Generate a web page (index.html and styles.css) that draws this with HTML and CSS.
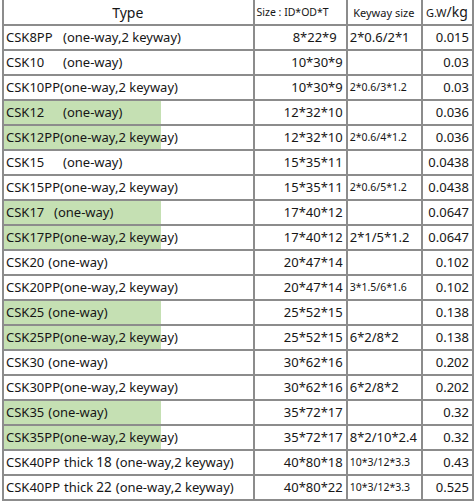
FILE: index.html
```html
<!DOCTYPE html>
<html>
<head>
<meta charset="utf-8">
<link rel="stylesheet" href="styles.css">
</head>
<body>
<table class="spec">
  <colgroup>
    <col class="c-type"><col class="c-size"><col class="c-key"><col class="c-gw">
  </colgroup>
  <tr class="head">
    <td class="h-type">Type</td>
    <td class="h-size">Size : ID*OD*T</td>
    <td class="h-key">Keyway size</td>
    <td class="h-gw">G.W<span class="kg">/kg</span></td>
  </tr>
  <tr><td class="type"><span class="code wide">CSK8PP</span>(one-way,2 keyway)</td><td class="size short">8*22*9</td><td class="key">2*0.6/2*1</td><td class="gw">0.015</td></tr>
  <tr><td class="type"><span class="code wide">CSK10</span>(one-way)</td><td class="size">10*30*9</td><td class="key"></td><td class="gw">0.03</td></tr>
  <tr><td class="type"><span class="code">CSK10PP</span>(one-way,2 keyway)</td><td class="size">10*30*9</td><td class="key sm">2*0.6/3*1.2</td><td class="gw">0.03</td></tr>
  <tr><td class="type green"><span class="code wide">CSK12</span>(one-way)</td><td class="size">12*32*10</td><td class="key"></td><td class="gw">0.036</td></tr>
  <tr><td class="type green"><span class="code">CSK12PP</span>(one-way,2 keyway)</td><td class="size">12*32*10</td><td class="key sm">2*0.6/4*1.2</td><td class="gw">0.036</td></tr>
  <tr><td class="type"><span class="code wide">CSK15</span>(one-way)</td><td class="size">15*35*11</td><td class="key"></td><td class="gw">0.0438</td></tr>
  <tr><td class="type"><span class="code">CSK15PP</span>(one-way,2 keyway)</td><td class="size">15*35*11</td><td class="key sm">2*0.6/5*1.2</td><td class="gw">0.0438</td></tr>
  <tr><td class="type green"><span class="code mid">CSK17</span>(one-way)</td><td class="size">17*40*12</td><td class="key"></td><td class="gw">0.0647</td></tr>
  <tr><td class="type green"><span class="code">CSK17PP</span>(one-way,2 keyway)</td><td class="size">17*40*12</td><td class="key">2*1/5*1.2</td><td class="gw">0.0647</td></tr>
  <tr><td class="type"><span class="code sp">CSK20</span>(one-way)</td><td class="size">20*47*14</td><td class="key"></td><td class="gw">0.102</td></tr>
  <tr><td class="type"><span class="code">CSK20PP</span>(one-way,2 keyway)</td><td class="size">20*47*14</td><td class="key sm">3*1.5/6*1.6</td><td class="gw">0.102</td></tr>
  <tr><td class="type green"><span class="code sp">CSK25</span>(one-way)</td><td class="size">25*52*15</td><td class="key"></td><td class="gw">0.138</td></tr>
  <tr><td class="type green"><span class="code">CSK25PP</span>(one-way,2 keyway)</td><td class="size">25*52*15</td><td class="key">6*2/8*2</td><td class="gw">0.138</td></tr>
  <tr><td class="type"><span class="code sp">CSK30</span>(one-way)</td><td class="size">30*62*16</td><td class="key"></td><td class="gw">0.202</td></tr>
  <tr><td class="type"><span class="code">CSK30PP</span>(one-way,2 keyway)</td><td class="size">30*62*16</td><td class="key">6*2/8*2</td><td class="gw">0.202</td></tr>
  <tr><td class="type green"><span class="code sp">CSK35</span>(one-way)</td><td class="size">35*72*17</td><td class="key"></td><td class="gw">0.32</td></tr>
  <tr><td class="type green"><span class="code">CSK35PP</span>(one-way,2 keyway)</td><td class="size">35*72*17</td><td class="key">8*2/10*2.4</td><td class="gw">0.32</td></tr>
  <tr><td class="type"><span class="code sp">CSK40PP</span>thick<span class="num">18</span>(one-way,2 keyway)</td><td class="size">40*80*18</td><td class="key sm">10*3/12*3.3</td><td class="gw">0.43</td></tr>
  <tr><td class="type"><span class="code sp">CSK40PP</span>thick<span class="num">22</span>(one-way,2 keyway)</td><td class="size">40*80*22</td><td class="key sm">10*3/12*3.3</td><td class="gw">0.525</td></tr>
</table>
</body>
</html>
```

FILE: styles.css
```css
html, body {
  margin: 0;
  padding: 0;
  background: #ffffff;
}

.spec {
  border-collapse: collapse;
  table-layout: fixed;
  width: 472px;
  margin-left: 2px;
  font-family: "Noto Sans", "Open Sans", sans-serif;
  color: #161616;
}

.c-type { width: 250px; }
.c-size { width: 93px; }
.c-key { width: 75px; }
.c-gw { width: 51px; }

.spec td {
  border: 2px solid #8c8c8c;
  height: 23px;
  padding: 0 3px 0 2px;
  font-size: 13px;
  line-height: 23px;
  white-space: nowrap;
  overflow: hidden;
}

.spec tr.head td {
  border-top: none;
  height: 24px;
}

.h-type {
  text-align: center;
  font-size: 14px !important;
}

.h-size {
  font-size: 10.5px !important;
  padding-left: 2px !important;
}

.h-key {
  font-size: 11px !important;
  text-align: center;
}

.h-gw {
  font-size: 11px !important;
  text-align: center;
}

.kg {
  font-size: 14px;
}

.type.green {
  background: linear-gradient(to right, #c5e0b3 0, #c5e0b3 157px, #ffffff 157px);
}

.code { display: inline-block; }
.code.wide { min-width: 57px; }
.code.mid { min-width: 48px; }
.code.sp { margin-right: 4px; }

.num {
  font-size: 13.5px;
  margin: 0 4px 0 3px;
}

.size {
  text-align: right;
}

.size.short {
  padding-right: 9px !important;
}

.key {
  text-align: left;
}

.key.sm {
  font-size: 10.5px !important;
}

.gw {
  text-align: right;
}
```
